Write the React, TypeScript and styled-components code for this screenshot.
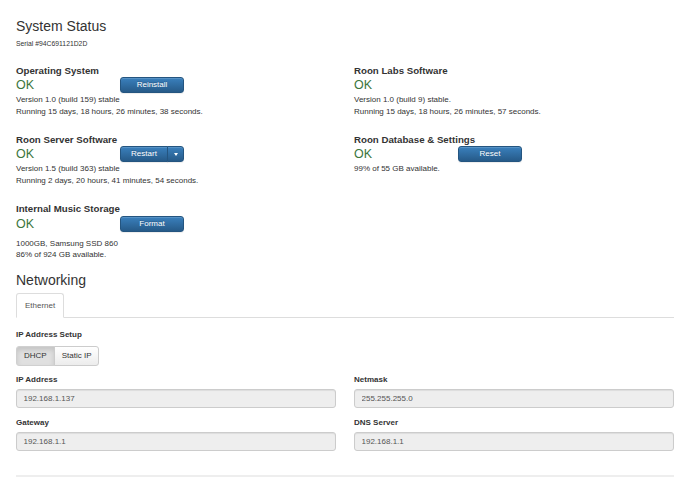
import styled, { createGlobalStyle } from 'styled-components'

const GlobalStyle = createGlobalStyle`
  html, body {
    margin: 0;
    padding: 0;
    background: #fff;
  }
  body {
    font-family: "Liberation Sans", Arial, Helvetica, sans-serif;
    color: #333;
  }
  * {
    box-sizing: border-box;
  }
`

const Page = styled.div`
  padding: 18px 15px 0 16px;
`

const Title = styled.h1<{ $top?: number }>`
  margin: ${props => props.$top ?? 0}px 0 0;
  font-size: 14px;
  line-height: 16px;
  font-weight: normal;
`

const Serial = styled.div`
  margin-top: 4.5px;
  font-size: 6.8px;
  line-height: 9px;
`

const Grid = styled.div<{ $top: number; $rowGap: number }>`
  display: grid;
  grid-template-columns: 1fr 1fr;
  column-gap: 18px;
  row-gap: ${props => props.$rowGap}px;
  margin-top: ${props => props.$top}px;
`

const Section = styled.section``

const SectionLabel = styled.div`
  font-size: 9.7px;
  line-height: 13.5px;
  font-weight: bold;
`

const StatusRow = styled.div`
  display: flex;
  align-items: center;
  height: 16px;
  margin-bottom: 1px;
`

const Ok = styled.span`
  flex: 0 0 104px;
  font-size: 12.5px;
  line-height: 16px;
  color: #3c763d;
`

const Details = styled.div<{ $spaced?: boolean }>`
  margin-top: ${props => (props.$spaced ? 6.5 : 0)}px;
  font-size: 8px;
  line-height: 11.3px;
`

const PrimaryButton = styled.button<{ $width: number; $split?: 'left' | 'right' }>`
  display: flex;
  align-items: center;
  justify-content: center;
  width: ${props => props.$width}px;
  height: 16px;
  padding: 0;
  margin: 0;
  margin-left: ${props => (props.$split === 'right' ? -1 : 0)}px;
  border: 1px solid #245580;
  border-radius: ${props =>
    props.$split === 'left' ? '3px 0 0 3px' : props.$split === 'right' ? '0 3px 3px 0' : '3px'};
  background: linear-gradient(to bottom, #3a80bd 0%, #265a88 100%);
  box-shadow: inset 0 1px 0 rgba(255, 255, 255, 0.15), 0 1px 1px rgba(0, 0, 0, 0.075);
  color: #fff;
  text-shadow: 0 -1px 0 rgba(0, 0, 0, 0.2);
  font-family: inherit;
  font-size: 8px;
  line-height: 1;
  cursor: pointer;
`

const SplitGroup = styled.div`
  display: flex;
`

const Caret = styled.span`
  width: 0;
  height: 0;
  border-top: 3px solid #fff;
  border-left: 2.5px solid transparent;
  border-right: 2.5px solid transparent;
`

const Heading = styled(Title)``

const TabBar = styled.div`
  display: flex;
  margin-top: 5.5px;
  border-bottom: 1px solid #ddd;
`

const Tab = styled.div`
  margin-bottom: -1px;
  padding: 6px 8px 5.5px;
  border: 1px solid #ddd;
  border-bottom-color: #fff;
  border-radius: 3px 3px 0 0;
  background: #fff;
  color: #555;
  font-size: 8px;
  line-height: 11.3px;
`

const FieldLabel = styled.div<{ $top?: number }>`
  margin-top: ${props => props.$top ?? 0}px;
  font-size: 8px;
  line-height: 11px;
  font-weight: bold;
`

const Toggle = styled.div`
  display: flex;
  margin-top: 5.3px;
`

const ToggleButton = styled.button<{ $active?: boolean; $first?: boolean }>`
  margin: 0;
  margin-left: ${props => (props.$first ? 0 : -1)}px;
  padding: 3.35px 7px;
  border: 1px solid ${props => (props.$active ? '#d0d0d0' : '#ccc')};
  border-radius: ${props => (props.$first ? '3px 0 0 3px' : '0 3px 3px 0')};
  background: ${props =>
    props.$active ? '#e0e0e0' : 'linear-gradient(to bottom, #fff 0%, #ececec 100%)'};
  box-shadow: ${props =>
    props.$active ? 'inset 0 3px 5px rgba(0, 0, 0, 0.125)' : 'inset 0 1px 0 rgba(255, 255, 255, 0.15)'};
  color: #333;
  font-family: inherit;
  font-size: 8px;
  line-height: 11.3px;
  cursor: pointer;
`

const Field = styled.div``

const Input = styled.input`
  display: block;
  width: 100%;
  height: 19.5px;
  margin-top: 4px;
  padding: 0 6.5px;
  border: 1px solid #ccc;
  border-radius: 3px;
  background: #eee;
  box-shadow: inset 0 1px 1px rgba(0, 0, 0, 0.075);
  color: #555;
  font-family: inherit;
  font-size: 8px;
  outline: none;
`

const Rule = styled.hr`
  margin: 24px 0 0;
  height: 2px;
  border: none;
  background: #eee;
`

interface StatusProps {
  label: string
  lines: string[]
  spaced?: boolean
  children?: React.ReactNode
}

const Status = ({ label, lines, spaced, children }: StatusProps) => (
  <Section>
    <SectionLabel>{label}</SectionLabel>
    <StatusRow>
      <Ok>OK</Ok>
      {children}
    </StatusRow>
    <Details $spaced={spaced}>
      {lines.map(line => (
        <div key={line}>{line}</div>
      ))}
    </Details>
  </Section>
)

const fields = [
  { label: 'IP Address', value: '192.168.1.137' },
  { label: 'Netmask', value: '255.255.255.0' },
  { label: 'Gateway', value: '192.168.1.1' },
  { label: 'DNS Server', value: '192.168.1.1' },
]

export default function App() {
  return (
    <>
      <GlobalStyle />
      <Page>
        <Title>System Status</Title>
        <Serial>Serial #94C691121D2D</Serial>

        <Grid $top={16.4} $rowGap={16}>
          <Status
            label="Operating System"
            lines={['Version 1.0 (build 159) stable', 'Running 15 days, 18 hours, 26 minutes, 38 seconds.']}
          >
            <PrimaryButton $width={64}>Reinstall</PrimaryButton>
          </Status>
          <Status
            label="Roon Labs Software"
            lines={['Version 1.0 (build 9) stable.', 'Running 15 days, 18 hours, 26 minutes, 57 seconds.']}
          />
          <Status
            label="Roon Server Software"
            lines={['Version 1.5 (build 363) stable', 'Running 2 days, 20 hours, 41 minutes, 54 seconds.']}
          >
            <SplitGroup>
              <PrimaryButton $width={48} $split="left">Restart</PrimaryButton>
              <PrimaryButton $width={17} $split="right">
                <Caret />
              </PrimaryButton>
            </SplitGroup>
          </Status>
          <Status label="Roon Database & Settings" lines={['99% of 55 GB available.']}>
            <PrimaryButton $width={64}>Reset</PrimaryButton>
          </Status>
          <Status
            label="Internal Music Storage"
            lines={['1000GB, Samsung SSD 860', '86% of 924 GB available.']}
            spaced
          >
            <PrimaryButton $width={64}>Format</PrimaryButton>
          </Status>
        </Grid>

        <Heading $top={11}>Networking</Heading>
        <TabBar>
          <Tab>Ethernet</Tab>
        </TabBar>

        <FieldLabel $top={11.3}>IP Address Setup</FieldLabel>
        <Toggle>
          <ToggleButton $first $active>DHCP</ToggleButton>
          <ToggleButton>Static IP</ToggleButton>
        </Toggle>

        <Grid $top={8.3} $rowGap={8.2}>
          {fields.map(field => (
            <Field key={field.label}>
              <FieldLabel>{field.label}</FieldLabel>
              <Input readOnly value={field.value} />
            </Field>
          ))}
        </Grid>

        <Rule />
      </Page>
    </>
  )
}
